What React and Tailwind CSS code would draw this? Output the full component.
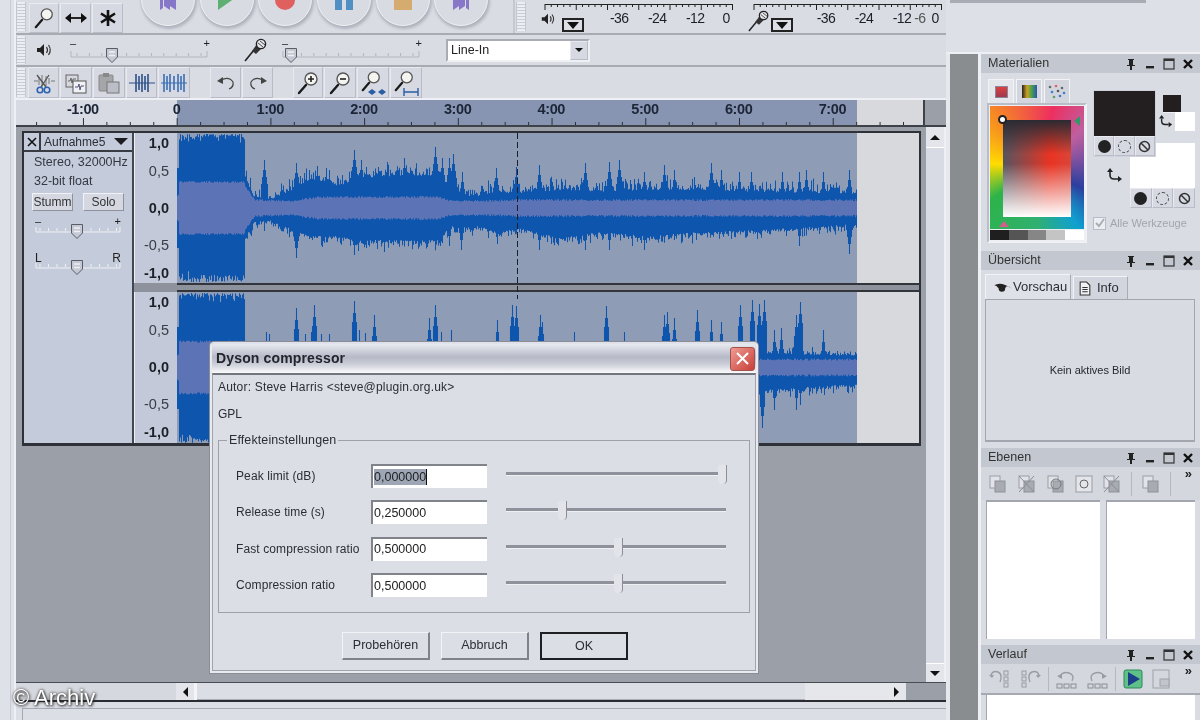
import React from "react";

const lerp = (pts, x) => {
  if (x <= pts[0][0]) return pts[0][1];
  for (let i = 1; i < pts.length; i++) {
    if (x <= pts[i][0]) {
      const [a, b] = pts[i - 1];
      const [c, d] = pts[i];
      return b + ((d - b) * (x - a)) / (c - a);
    }
  }
  return pts[pts.length - 1][1];
};

function makeWave({ seed, y0, y1, cy, top, bot, rms, spT, spB, jit, sw, sl }) {
  let s = seed;
  const r = () => {
    s = (s * 16807) % 2147483647;
    return s / 2147483647;
  };
  let blue = "";
  let light = "";
  for (let x = 178; x <= 857; x++) {
    let t, b;
    if (x < 246) {
      t = y0 + 1 + (x < 180 ? 34 : r() * r() * 12);
      b = y1 - 1 - (x < 180 ? 34 : r() * r() * 12);
    } else {
      t = lerp(top, x) - r() * r() * jit;
      b = lerp(bot, x) + r() * r() * 12;
    }
    for (const [sx, sy] of spT) {
      const d = Math.abs(x - sx);
      if (d < 1) t = Math.min(t, sy);
      else if (d < sw) t = Math.min(t, sy + d * sl + 3);
    }
    for (const [sx, sy] of spB) {
      const d = Math.abs(x - sx);
      if (d < 1) b = Math.max(b, sy);
      else if (d < sw) b = Math.max(b, sy - d * sl - 3);
    }
    blue += `M${x + 0.5} ${t.toFixed(1)}V${b.toFixed(1)}`;
    const a = (x < 246 ? (x < 180 ? 12 : 25) : lerp(rms, x)) + r() * 2;
    light += `M${x + 0.5} ${(cy - a).toFixed(1)}V${(cy + a).toFixed(1)}`;
  }
  return { blue, light };
}

const w1 = makeWave({
  seed: 4711,
  y0: 133,
  y1: 283,
  cy: 208,
  jit: 16,
  sw: 4,
  sl: 7,
  top: [[246, 178], [254, 196], [270, 200], [290, 192], [310, 180], [340, 186], [360, 178], [400, 176], [440, 176], [450, 196], [480, 196], [500, 192], [520, 194], [560, 190], [600, 192], [650, 190], [700, 190], [760, 192], [857, 194]],
  bot: [[246, 238], [254, 222], [270, 220], [290, 228], [310, 236], [340, 236], [360, 240], [400, 240], [440, 240], [450, 226], [480, 226], [500, 232], [520, 228], [560, 238], [600, 232], [650, 236], [700, 232], [760, 230], [857, 224]],
  rms: [[246, 20], [256, 7], [290, 6], [320, 10], [440, 10], [450, 6], [480, 6], [520, 7], [857, 7]],
  spT: [[265, 160], [297, 163], [310, 170], [318, 166], [330, 170], [355, 150], [362, 160], [388, 162], [405, 158], [436, 147], [443, 158], [450, 158], [454, 154], [463, 172], [497, 168], [517, 167], [540, 165], [586, 163], [610, 162], [620, 160], [645, 172], [665, 165], [675, 170], [712, 163], [722, 170], [740, 172], [752, 172], [783, 172], [800, 172], [807, 170], [824, 172], [850, 170]],
  spB: [[297, 258], [355, 255], [385, 252], [450, 246], [462, 250], [498, 244], [540, 250], [586, 250], [610, 250], [645, 250], [697, 240], [800, 246], [850, 254]],
});
const w2 = makeWave({
  seed: 9241,
  y0: 292,
  y1: 444,
  cy: 367.5,
  jit: 8,
  sw: 3,
  sl: 9,
  top: [[246, 352], [700, 352], [740, 352], [760, 353], [857, 356]],
  bot: [[246, 400], [740, 390], [760, 390], [857, 384]],
  rms: [[246, 20], [256, 8], [857, 7]],
  spT: [[267, 332], [270, 334], [297, 308], [306, 334], [312, 332], [315, 305], [322, 334], [330, 334], [355, 301], [360, 330], [366, 333], [375, 315], [430, 318], [436, 305], [442, 332], [452, 330], [498, 320], [513, 305], [517, 306], [541, 315], [543, 322], [575, 332], [607, 306], [625, 332], [665, 315], [668, 312], [675, 318], [698, 310], [712, 320], [722, 322], [741, 305], [753, 300], [760, 304], [765, 300], [775, 330], [782, 328], [797, 315], [801, 302], [824, 330]],
  spB: [[763, 428], [775, 410], [797, 410], [801, 405], [825, 395]],
});

const Wave = ({ w, top, height }) => (
  <svg width="680" height={height} viewBox={`178 ${top} 680 ${height}`} className="block shrink-0">
    <path d={w.blue} stroke="#0e55ad" strokeWidth="1.05" fill="none" />
    <path d={w.light} stroke="#5c74b5" strokeWidth="1.05" fill="none" />
  </svg>
);

const Grip = ({ className = "" }) => (
  <div className={`w-[10px] shrink-0 my-[2px] border-x border-[#c3c6d0] bg-[repeating-linear-gradient(180deg,#eceef3_0,#eceef3_2px,#c9ccd5_2px,#c9ccd5_3px)] ${className}`} />
);

const Btn = ({ children, className = "" }) => (
  <div className={`flex items-center justify-center shrink-0 bg-[#d7d9e2] border-t border-l border-[#e8eaef] border-r border-b border-r-[#b9bcc6] border-b-[#b9bcc6] ${className}`}>
    {children}
  </div>
);

const Mag = ({ inner, s = 24 }) => (
  <svg width={s} height={s} viewBox="0 0 24 24">
    <line x1="10" y1="14" x2="3" y2="22" stroke="#1a1a1a" strokeWidth="2.4" strokeLinecap="round" />
    <circle cx="15" cy="8" r="6" fill="#f4f5f0" stroke="#555" strokeWidth="1.4" />
    {inner}
  </svg>
);

const Speaker = ({ s = 18 }) => (
  <svg width={s} height={s} viewBox="0 0 18 18">
    <path d="M2 7h3l4-4v12l-4-4H2z" fill="#222" />
    <path d="M11.5 6q2 3 0 6M13.5 4q3.5 5 0 10" stroke="#333" strokeWidth="1.2" fill="none" />
  </svg>
);

const Mic = ({ s = 24 }) => (
  <svg width={s} height={s} viewBox="0 0 24 24">
    <path d="M1 23l9-11" stroke="#222" strokeWidth="1.6" />
    <path d="M8 13l4 3 8-8-5-5z" fill="#333" />
    <circle cx="17" cy="6" r="4.6" fill="#e5e6ea" stroke="#222" strokeWidth="1.4" />
    <path d="M14 5l5 4M16 3l5 4" stroke="#222" strokeWidth=".8" />
  </svg>
);

const Thumb = ({ className = "" }) => (
  <svg width="14" height="17" viewBox="0 0 14 17" className={`absolute ${className}`}>
    <path d="M1.5 1.5h11v8.5l-5.5 5.5-5.5-5.5z" fill="#c5c9d3" stroke="#5a5d67" strokeWidth="1" />
    <path d="M4 5h6M4 8.5h6" stroke="#eef0f4" strokeWidth="1.3" />
  </svg>
);

const Mixer = ({ w, thumb, className = "" }) => (
  <div className={`relative h-[30px] shrink-0 ${w} ${className}`}>
    <span className="absolute left-0 top-[3px] text-[11px] leading-none text-[#222]">–</span>
    <span className="absolute right-0 top-[3px] text-[11px] leading-none text-[#222]">+</span>
    <svg width="100%" height="12" className="absolute left-0 top-[14px]">
      <path d="M1 8H137M1 2V8M137 2V8" stroke="#b3b6bd" fill="none" />
      {Array.from({ length: 11 }).map((_, i) => (
        <line key={i} x1={i * 12.4 + 7} x2={i * 12.4 + 7} y1="4" y2="7" stroke="#b3b6bd" />
      ))}
    </svg>
    <Thumb className={thumb} />
  </div>
);

const RoundBtn = ({ children }) => (
  <div className="w-[54px] h-[54px] -mt-[28px] mr-[4.7px] rounded-full shrink-0 bg-[#d9dbe3] border border-[#eef0f4] shadow-[1px_2px_3px_1px_#b0b3bc] flex items-end justify-center pb-[15px]">
    {children}
  </div>
);

const SkipIcon = ({ flip }) => (
  <svg width="18" height="14" viewBox="0 0 18 14" className={flip ? "-scale-x-100" : ""}>
    <path d="M1 0h3v12L1 14zM5 0l6 0v4l6-4v14l-6-4v4l-6-4z" fill="#8877c8" />
  </svg>
);

const MeterTicks = ({ ticks, w = 190 }) => (
  <svg width={w} height="8" className="block">
    <path d={`M1 0.5H${w - 1}`} stroke="#222" />
    {ticks.map((t, i) => (
      <line key={i} x1={t} x2={t} y1="0" y2={i % 5 === 0 ? 6 : 3} stroke="#222" />
    ))}
  </svg>
);

const ticks = Array.from({ length: 31 }).map((_, i) => 1 + i * 6.25);

const Drop = ({ className = "" }) => (
  <div className={`w-[22px] h-[14px] border-2 border-[#222] bg-[#dcdee6] flex items-center justify-center shrink-0 ${className}`}>
    <div className="w-0 h-0 border-x-[6px] border-x-transparent border-t-[7px] border-t-[#111]" />
  </div>
);

const ML = ({ children, className = "" }) => (
  <span className={`mt-[6px] text-[14px] leading-none tracking-[-0.6px] text-[#1c1f28] shrink-0 ${className}`}>{children}</span>
);

const ScissorsIcon = () => (
  <svg width="24" height="24" viewBox="0 0 24 24">
    <path d="M2 10h4M19 10h4M7 6v8M10 4v12M14 5v10M17 7v6" stroke="#777" strokeWidth="1" />
    <path d="M17 4L9 16M5 4l9 12" stroke="#555" strokeWidth="1.3" />
    <circle cx="8" cy="19" r="2.8" fill="none" stroke="#2a62b0" strokeWidth="1.6" />
    <circle cx="15" cy="19" r="2.8" fill="none" stroke="#2a62b0" strokeWidth="1.6" />
  </svg>
);
const CopyIcon = () => (
  <svg width="24" height="24" viewBox="0 0 24 24">
    <rect x="2" y="4" width="12" height="12" fill="#d5d7de" stroke="#666" />
    <path d="M4 10h2l1-3 1 5 1-4h3" stroke="#666" fill="none" />
    <rect x="9" y="10" width="13" height="12" fill="#f0f1f4" stroke="#555" />
    <path d="M11 16h3l1-3 1 6 1-4h3" stroke="#557" fill="none" />
  </svg>
);
const PasteIcon = () => (
  <svg width="24" height="24" viewBox="0 0 24 24">
    <rect x="2" y="4" width="14" height="16" rx="1" fill="#a5a6aa" stroke="#888" />
    <rect x="6" y="2" width="6" height="4" fill="#888" />
    <rect x="10" y="11" width="12" height="11" fill="#bcbec7" stroke="#777" />
  </svg>
);
const TrimIcon = ({ c = "#2b4f8a", gap }) => (
  <svg width="26" height="22" viewBox="0 0 26 22">
    <path d="M0 11h26" stroke={c} strokeWidth="1" />
    {(gap ? [3, 6, 9, 13, 17, 20, 23] : [7, 10, 13, 16, 19]).map((x, i) => (
      <path key={i} d={`M${x} ${i % 2 ? 4 : 2}V${i % 2 ? 18 : 20}`} stroke={c} strokeWidth="1.6" />
    ))}
  </svg>
);
const UndoIcon = ({ flip }) => (
  <svg width="20" height="18" viewBox="0 0 20 18" className={flip ? "-scale-x-100" : ""}>
    <path d="M5 6q8-4 12 2q1 5-4 7" stroke="#444" strokeWidth="1.2" fill="none" />
    <path d="M1 7l6-4v7z" fill="#444" />
  </svg>
);

const HdrBtns = () => (
  <div className="flex items-center gap-[7px] ml-auto pr-[6px]">
    <svg width="12" height="12" viewBox="0 0 12 12"><path d="M3 1h6v1H8v5h2v1H7v4H5V8H2V7h2V2H3z" fill="#222" /></svg>
    <svg width="12" height="12" viewBox="0 0 12 12"><rect x="2" y="8" width="8" height="2.4" fill="#222" /></svg>
    <svg width="12" height="12" viewBox="0 0 12 12"><rect x="1" y="1" width="10" height="10" fill="none" stroke="#333" strokeWidth="1.2" /><rect x="1" y="1" width="10" height="2" fill="#333" /></svg>
    <svg width="12" height="12" viewBox="0 0 12 12"><path d="M2 2l8 8M10 2l-8 8" stroke="#111" strokeWidth="2.4" /></svg>
  </div>
);

const PanelHead = ({ title }) => (
  <div className="h-[19px] bg-[#c3c7d0] flex items-center pl-[7px] shrink-0">
    <span className="text-[12.5px] text-[#333]">{title}</span>
    <HdrBtns />
  </div>
);

const GrayLayers = ({ v = 0 }) => (
  <svg width="20" height="20" viewBox="0 0 20 20">
    <rect x="2" y="2" width="10" height="12" fill="#e2e3e8" stroke="#9c9ea6" />
    <rect x="7" y="7" width="10" height="11" fill="#a8abb2" stroke="#8f9199" />
    {v === 1 && <path d="M2 2l15 16M17 2L2 18" stroke="#8b8d95" strokeWidth="1" />}
    {v === 2 && <circle cx="10" cy="10" r="5" fill="none" stroke="#777" />}
  </svg>
);

const HistoryIcon = ({ flip }) => (
  <svg width="24" height="22" viewBox="0 0 24 22" className={flip ? "-scale-x-100" : ""}>
    <path d="M3 7q2-5 7-3t2 10" stroke="#9a9ca4" fill="none" strokeWidth="1.4" />
    <path d="M1 7h5l-2 3z" fill="#9a9ca4" />
    {[3, 9, 15].map((y) => (
      <rect key={y} x="16" y={y} width="4" height="4" fill="none" stroke="#9a9ca4" />
    ))}
  </svg>
);
const UndoList = ({ flip }) => (
  <svg width="24" height="22" viewBox="0 0 24 22" className={flip ? "-scale-x-100" : ""}>
    <path d="M4 9q4-6 10-4t3 8" stroke="#9a9ca4" fill="none" strokeWidth="1.4" />
    <path d="M2 8l5-2v5z" fill="#9a9ca4" />
    {[2, 9, 16].map((x) => (
      <rect key={x} x={x} y="16" width="5" height="4" fill="none" stroke="#8c8e96" />
    ))}
  </svg>
);

const Swatch3 = ({ className = "" }) => (
  <div className={`flex h-[20px] ${className}`}>
    <Btn className="flex-1"><div className="w-[13px] h-[13px] rounded-full bg-[#222]" /></Btn>
    <Btn className="flex-1"><div className="w-[13px] h-[13px] rounded-full border border-dashed border-[#444]" /></Btn>
    <Btn className="flex-1">
      <svg width="13" height="13" viewBox="0 0 13 13"><circle cx="6.5" cy="6.5" r="5" fill="none" stroke="#333" strokeWidth="1.5" /><path d="M3 3l7 7" stroke="#333" strokeWidth="1.5" /></svg>
    </Btn>
  </div>
);

const SwapIcon = ({ s = 16 }) => (
  <svg width={s} height={s} viewBox="0 0 16 16">
    <path d="M3 5v3q0 4 4 4h4" stroke="#222" strokeWidth="1.6" fill="none" />
    <path d="M3 1l3 4H0zM15 12l-4 3V9z" fill="#222" />
  </svg>
);

const TrackLabel = ({ children, h, bold }) => (
  <div className={`flex items-center justify-end pr-[8px] text-[14.5px] leading-none ${h} ${bold ? "font-bold text-[#1d2029]" : "text-[#3b3e48]"}`}>
    {children}
  </div>
);

const VRuler = () => (
  <div className="w-[43px] shrink-0 bg-[#c3c9d8] border-l border-[#eef0f5] flex flex-col pt-[1px]">
    <TrackLabel h="h-[18px]" bold>1,0</TrackLabel>
    <div className="h-[10px]" />
    <TrackLabel h="h-[18px]">0,5</TrackLabel>
    <div className="h-[19px]" />
    <TrackLabel h="h-[18px]" bold>0,0</TrackLabel>
    <div className="h-[19px]" />
    <TrackLabel h="h-[18px]">-0,5</TrackLabel>
    <div className="h-[10px]" />
    <TrackLabel h="h-[18px]" bold>-1,0</TrackLabel>
  </div>
);

const Row = ({ label, value, thumb, selected }) => (
  <div className="flex items-center h-[24px]">
    <span className="w-[135px] shrink-0 text-[12px] text-[#2b2e36] tracking-[0.1px]">{label}</span>
    <div className="w-[116px] h-[24px] shrink-0 bg-white border-t-2 border-l-2 border-t-[#808389] border-l-[#808389] flex items-center pl-[1px] text-[12.5px] text-[#222]">
      {selected ? (
        <span className="bg-[#9ea6b6] border-r border-[#111] leading-[16px]">{value}</span>
      ) : (
        value
      )}
    </div>
    <div className="relative w-[220px] h-[20px] ml-[19px] shrink-0">
      <div className="absolute left-0 right-0 top-[6px] h-[4px] bg-[#8f929a] border-b border-[#eef0f4]" />
      <div className={`absolute top-[-1px] w-[9px] h-[19px] bg-[#e2e4ea] border-r border-[#8b8e97] rounded-b-[4px] ${thumb}`} />
    </div>
  </div>
);

const DlgBtn = ({ children, def }) => (
  <div className={`w-[88px] h-[28px] flex items-center justify-center text-[12.5px] text-[#2a2d35] bg-[#dcdee6] ${def ? "border-2 border-[#1d1f24]" : "border border-[#f3f4f7] border-r-2 border-b-2 border-r-[#7f828b] border-b-[#7f828b]"}`}>
    {children}
  </div>
);

export default function App() {
  const font = { fontFamily: '"Liberation Sans", Arial, sans-serif' };
  return (
    <div style={font} className="relative w-[1200px] h-[720px] overflow-hidden flex bg-[#dadce4] blur-[0.35px]">
      {/* left strip */}
      <div className="w-[16px] shrink-0 bg-[#dfe1e8] border-r-2 border-[#eef0f5] flex">
        <div className="w-[11px] border-r border-[#c9ccd5]" />
      </div>

      {/* audacity */}
      <div className="w-[930px] shrink-0 flex flex-col">
        {/* row 1 */}
        <div className="h-[35px] shrink-0 flex border-b-2 border-[#a8abb2] overflow-hidden">
          <Grip />
          <div className="flex gap-px ml-[3px] mt-[3px] shrink-0 h-[30px]">
            <Btn className="w-[30px]"><Mag s={22} /></Btn>
            <Btn className="w-[31px]">
              <svg width="22" height="12" viewBox="0 0 22 12"><path d="M3 6h16" stroke="#111" strokeWidth="1.8" /><path d="M0 6l6-5v10zM22 6l-6-5v10z" fill="#111" /></svg>
            </Btn>
            <Btn className="w-[31px]">
              <svg width="18" height="18" viewBox="0 0 18 18"><path d="M9 1v16M2 4.5l14 9M16 4.5l-14 9" stroke="#111" strokeWidth="2.6" /></svg>
            </Btn>
          </div>
          <div className="flex ml-[18px] shrink-0 w-[367px]">
            <RoundBtn><SkipIcon /></RoundBtn>
            <RoundBtn><svg width="20" height="14" viewBox="0 0 20 14"><path d="M1 0h0l17 2L1 14z" fill="#5fb070" /></svg></RoundBtn>
            <RoundBtn><div className="w-[20px] h-[14px] rounded-b-full bg-[#e0605f]" /></RoundBtn>
            <RoundBtn><div className="w-[18px] h-[10px] flex justify-between"><div className="w-[7px] bg-[#4f8fc4]" /><div className="w-[7px] bg-[#4f8fc4]" /></div></RoundBtn>
            <RoundBtn><div className="w-[18px] h-[10px] bg-[#d6ab70]" /></RoundBtn>
            <RoundBtn><SkipIcon flip /></RoundBtn>
          </div>
          <div className="w-[2px] bg-[#c5c8d0] ml-[5px] shrink-0" />
          <Grip className="ml-[1px]" />
          <div className="flex flex-col flex-1 pl-[18px] pt-[4px]">
            <div className="flex">
              <MeterTicks ticks={ticks} />
              <div className="w-[19px]" />
              <MeterTicks ticks={ticks} />
            </div>
            <div className="flex items-start h-[26px] -mt-[7px] -ml-[4px]">
              <div className="mt-[6px] shrink-0"><Speaker s={16} /></div>
              <Drop className="ml-[6px] mt-[13px]" />
              <ML className="ml-[26px]">-36</ML>
              <ML className="ml-[19.6px]">-24</ML>
              <ML className="ml-[19.6px]">-12</ML>
              <ML className="ml-[18px]">0</ML>
              <div className="ml-[18px] mt-[5px] shrink-0"><Mic s={22} /></div>
              <Drop className="ml-[1px] mt-[13px]" />
              <ML className="ml-[24px]">-36</ML>
              <ML className="ml-[19.6px]">-24</ML>
              <ML className="ml-[19.6px]">-12</ML>
              <ML className="ml-[3px] text-[#555]">-6</ML>
              <ML className="ml-[6px]">0</ML>
            </div>
          </div>
        </div>

        {/* row 2 */}
        <div className="h-[32px] shrink-0 flex items-center border-b-2 border-[#a8abb2]">
          <Grip className="h-[28px]" />
          <div className="ml-[9px] shrink-0"><Speaker /></div>
          <Mixer w="w-[140px]" thumb="left-[35px] top-[12px]" className="ml-[17px]" />
          <div className="ml-[34px] shrink-0"><Mic /></div>
          <Mixer w="w-[140px]" thumb="left-[2px] top-[12px]" className="ml-[14px]" />
          <div className="ml-[24px] w-[144px] h-[23px] shrink-0 bg-white border-2 border-[#a9acb4] border-r-[#eef0f4] border-b-[#eef0f4] flex items-center pl-[3px] text-[12.5px] text-[#222]">
            Line-In
            <Btn className="ml-auto w-[18px] h-[19px] bg-[#d5d6da]">
              <div className="w-0 h-0 border-x-[4px] border-x-transparent border-t-[4px] border-t-[#111]" />
            </Btn>
          </div>
        </div>

        {/* row 3 */}
        <div className="h-[33px] shrink-0 flex items-center border-b-2 border-[#eef0f5]">
          <Grip className="h-[29px]" />
          <div className="flex gap-[1px] ml-[2px]">
            <Btn className="w-[31px] h-[31px]"><ScissorsIcon /></Btn>
            <Btn className="w-[32px] h-[31px]"><CopyIcon /></Btn>
            <Btn className="w-[32px] h-[31px]"><PasteIcon /></Btn>
            <Btn className="w-[31px] h-[31px]"><TrimIcon /></Btn>
            <Btn className="w-[32px] h-[31px]"><TrimIcon c="#3a6fb4" gap /></Btn>
          </div>
          <div className="flex gap-[1px] ml-[20px]">
            <Btn className="w-[31px] h-[31px]"><UndoIcon /></Btn>
            <Btn className="w-[31px] h-[31px]"><UndoIcon flip /></Btn>
          </div>
          <div className="flex gap-[1px] ml-[20px]">
            <Btn className="w-[30px] h-[31px]"><Mag inner={<path d="M12 8h6M15 5v6" stroke="#222" strokeWidth="1.6" />} /></Btn>
            <Btn className="w-[32px] h-[31px]"><Mag inner={<path d="M12 8h6" stroke="#222" strokeWidth="1.6" />} /></Btn>
            <Btn className="w-[32px] h-[31px]">
              <div className="relative w-[26px] h-[26px]"><Mag s={22} /><svg width="18" height="8" viewBox="0 0 18 8" className="absolute right-0 bottom-0"><path d="M0 4l4-3v6zM8 4l-4-3v6zM10 4l4-3v6zM18 4l-4-3v6z" fill="#2a5ea5" /></svg></div>
            </Btn>
            <Btn className="w-[32px] h-[31px]">
              <div className="relative w-[26px] h-[26px]"><Mag s={22} /><svg width="16" height="8" viewBox="0 0 16 8" className="absolute right-0 bottom-0"><path d="M1 0v8M15 0v8M1 4h14" stroke="#2a5ea5" strokeWidth="1.4" /></svg></div>
            </Btn>
          </div>
        </div>

        {/* ruler */}
        <div className="h-[27px] shrink-0 flex border-b-2 border-[#3f4148] bg-[#9a9fa8]">
          <div className="w-[909px] flex flex-col bg-[linear-gradient(90deg,#d8dae3_161px,#8795b3_161px,#8795b3_841px,#d8d9dc_841px)] border-r-2 border-[#3f4148]">
            <div className="flex pl-[20px] pt-[1px] h-[18px] text-[14.5px] leading-[17px] font-bold text-[#1c2536] tracking-[-0.4px]">
              {["-1:00", "0", "1:00", "2:00", "3:00", "4:00", "5:00", "6:00", "7:00"].map((t) => (
                <span key={t} className="w-[93.7px] shrink-0 text-center">{t}</span>
              ))}
            </div>
            <svg width="909" height="7" className="block mt-auto">
              {Array.from({ length: 39 }).map((_, i) => (
                <line key={i} x1={20.6 + i * 23.43} x2={20.6 + i * 23.43} y1={(i + 2) % 4 === 0 ? 0 : 4} y2="7" stroke="#2d2f36" />
              ))}
            </svg>
          </div>
        </div>

        {/* center */}
        <div className="flex-1 flex min-h-0">
          <div className="w-[910px] bg-[#9a9fa8] pt-[4px] pl-[6px] relative">
            {/* tracks */}
            <div className="w-[899px] h-[315px] flex bg-[#8e929c] border-2 border-[#2f3138] border-b-[3px]">
              <div className="w-[110px] shrink-0 bg-[#c4cbda] border-r-2 border-[#454750] flex flex-col">
                <div className="h-[19px] flex items-center border-b-2 border-[#3a3c44] shrink-0">
                  <div className="w-[17px] h-[19px] border-r-2 border-[#3a3c44] flex items-center justify-center">
                    <svg width="10" height="10" viewBox="0 0 10 10"><path d="M1 1l8 8M9 1l-8 8" stroke="#111" strokeWidth="1.6" /></svg>
                  </div>
                  <span className="ml-[3px] text-[12px] text-[#2b2e38]">Aufnahme5</span>
                  <div className="ml-auto mr-[4px] w-0 h-0 border-x-[7px] border-x-transparent border-t-[7px] border-t-[#1c1c20]" />
                </div>
                <div className="pl-[10px] pt-[1px] text-[12.5px] leading-[19px] text-[#353843] whitespace-nowrap">
                  <div>Stereo, 32000Hz</div>
                  <div>32-bit float</div>
                </div>
                <div className="flex gap-[10px] pl-[8px] mt-[2px]">
                  <div className="w-[41px] h-[18px] flex items-center justify-center bg-[#d5d8e1] border-t border-l border-[#f0f2f6] border-r border-b border-r-[#8f929c] border-b-[#8f929c] text-[12px] text-[#333]">Stumm</div>
                  <div className="w-[41px] h-[18px] flex items-center justify-center bg-[#d5d8e1] border-t border-l border-[#f0f2f6] border-r border-b border-r-[#8f929c] border-b-[#8f929c] text-[12px] text-[#333]">Solo</div>
                </div>
                {[
                  ["–", "+", "text-[11px]"],
                  ["L", "R", "text-[12px]"],
                ].map(([a, b, tc], i) => (
                  <div key={a} className={`relative mx-[11px] h-[26px] ${i === 0 ? "mt-[5px]" : "mt-[10px]"}`}>
                    <span className={`absolute left-0 top-0 leading-none text-[#222] ${tc}`}>{a}</span>
                    <span className={`absolute right-0 top-0 leading-none text-[#222] ${tc}`}>{b}</span>
                    <svg width="86" height="10" className="absolute left-0 top-[9px]">
                      <path d="M1 7H85M1 2V7M85 2V7" stroke="#eef0f4" fill="none" />
                      {Array.from({ length: 10 }).map((_, k) => (
                        <line key={k} x1={k * 8.5 + 5} x2={k * 8.5 + 5} y1="3" y2="6" stroke="#eef0f4" />
                      ))}
                    </svg>
                    <Thumb className="left-[35px] top-[7px]" />
                  </div>
                ))}
              </div>
              <div className="flex-1 flex flex-col">
                <div className="h-[150px] flex shrink-0">
                  <VRuler />
                  <div className="h-[150px] overflow-hidden bg-[#8f9cb6] shrink-0"><Wave w={w1} top={133} height={150} /></div>
                  <div className="flex-1 bg-[#d8d9dc]" />
                </div>
                <div className="h-[9px] shrink-0 border-y-2 border-[#33353c] bg-[#8e929c] ml-[43px]" />
                <div className="flex-1 flex">
                  <VRuler />
                  <div className="h-[151px] overflow-hidden bg-[#8f9cb6] shrink-0"><Wave w={w2} top={292} height={151} /></div>
                  <div className="flex-1 bg-[#d8d9dc]" />
                </div>
              </div>
            </div>
            {/* edit cursor */}
            <div className="absolute left-[501px] top-[6px] h-[166px] w-px bg-[repeating-linear-gradient(180deg,#1c1f28_0,#1c1f28_6px,transparent_6px,transparent_9px)]" />
          </div>
          {/* v scroll */}
          <div className="w-[20px] shrink-0 bg-[#dfe1e8] border-r-2 border-[#eef0f5] flex flex-col">
            <div className="h-[21px] bg-[#e4e5ea] border-b border-[#fff] flex items-center justify-center">
              <div className="w-0 h-0 border-x-[5px] border-x-transparent border-b-[5px] border-b-[#111]" />
            </div>
            <div className="flex-1 bg-[#d9dbe4]" />
            <div className="h-[19px] bg-[#e4e5ea] border-t border-[#fff] flex items-center justify-center">
              <div className="w-0 h-0 border-x-[5px] border-x-transparent border-t-[5px] border-t-[#111]" />
            </div>
          </div>
        </div>

        {/* h scroll */}
        <div className="h-[20px] shrink-0 flex border-t border-[#4a4c54] border-b-2 border-b-[#2a2c32]">
          <div className="w-[160px] bg-[#d6d8df]" />
          <div className="w-[18px] bg-[#e4e5ea] flex items-center justify-center">
            <div className="w-0 h-0 border-y-[5px] border-y-transparent border-r-[5px] border-r-[#111]" />
          </div>
          <div className="w-[3px] bg-[#f4f5f8]" />
          <div className="w-[608px] bg-[#dcdee5] border-b border-[#a9acb6]" />
          <div className="w-[101px] bg-[#e6e7eb] flex items-center justify-end pr-[7px]">
            <div className="w-0 h-0 border-y-[5px] border-y-transparent border-l-[5px] border-l-[#111]" />
          </div>
          <div className="flex-1 bg-[#9a9fa8]" />
        </div>

        {/* status */}
        <div className="h-[18px] shrink-0 bg-[#dcdee6] pt-[6px] pl-[6px]">
          <div className="h-full border-t border-l border-[#a6a9b2]" />
        </div>
      </div>

      {/* right */}
      <div className="flex-1 flex flex-col min-w-0">
        <div className="h-[54px] shrink-0 bg-[#dee0e8] flex flex-col border-b-2 border-[#eef0f5]">
          <div className="h-[3px] w-[196px] ml-[4px] bg-[#a9acb4]" />
        </div>
        <div className="flex-1 flex min-h-0">
          <div className="w-[4px] bg-[#e6e8ee] shrink-0" />
          <div className="w-[28px] bg-[#898d90] shrink-0" />
          <div className="w-[3px] bg-[#eef0f5] shrink-0" />
          <div className="flex-1 flex flex-col bg-[#dadce4] min-w-0">
            {/* Materialien */}
            <PanelHead title="Materialien" />
            <div className="h-[178px] shrink-0 flex relative">
              <div className="ml-[6px] w-[100px] shrink-0 flex flex-col pt-[6px]">
                <div className="flex gap-[2px] pl-[1px] h-[24px]">
                  <div className="w-[26px] bg-[#e4e6ec] border-t border-x border-[#f2f3f6] flex items-center justify-center">
                    <div className="w-[13px] h-[12px] bg-[linear-gradient(180deg,#d84040,#a03850)] border border-[#889]" />
                  </div>
                  <div className="w-[26px] bg-[#d2d5dd] border-t border-x border-[#f2f3f6] flex items-center justify-center">
                    <div className="w-[15px] h-[13px] bg-[linear-gradient(90deg,#222,#d0a020,#40a050,#3050b0)]" />
                  </div>
                  <div className="w-[26px] bg-[#d2d5dd] border-t border-x border-[#f2f3f6] flex items-center justify-center">
                    <svg width="18" height="14" viewBox="0 0 18 14">
                      {[[2,2,"#666"],[8,1,"#e06060"],[14,3,"#666"],[4,7,"#3a7fd0"],[10,6,"#555"],[16,8,"#3a7fd0"],[6,12,"#60a060"],[12,11,"#3a7fd0"]].map(([x,y,c],i)=>(<circle key={i} cx={x} cy={y} r="1.3" fill={c} />))}
                    </svg>
                  </div>
                </div>
                <div className="h-[140px] border-2 border-[#b9bdc7] border-r-[#f0f1f5] border-b-[#f0f1f5] bg-[#eceef2] p-[1px] flex flex-col">
                  <div className="relative h-[123px] bg-[conic-gradient(from_315deg_at_50%_50%,#f7931e_0deg,#ed2f5f_60deg,#c05fa0_95deg,#2b3f9f_160deg,#10a0d0_190deg,#30b070_225deg,#2db34a_280deg,#ffdc00_320deg,#f7931e_360deg)] pt-[14px] pl-[13px]">
                    <div className="relative w-[68px] h-[97px] bg-[linear-gradient(180deg,#2a2a32_0%,transparent_35%),linear-gradient(180deg,transparent_45%,#ffffff_100%),linear-gradient(90deg,#555560_0%,#ea3322_70%,#d8463a_100%)]">
                      <div className="absolute -left-[5px] -top-[5px] w-[9px] h-[9px] rounded-full bg-white border-2 border-[#222]" />
                    </div>
                    <div className="absolute left-[84px] top-[10px] w-0 h-0 border-y-[5px] border-y-transparent border-r-[6px] border-r-[#2f9a68]" />
                    <div className="absolute left-[9px] bottom-[2px] w-0 h-0 border-x-[5px] border-x-transparent border-b-[6px] border-b-[#d0608a]" />
                  </div>
                  <div className="h-[10px] flex mt-[1px] shrink-0">
                    <div className="flex-1 bg-[#1f1f1f]" />
                    <div className="flex-1 bg-[#555]" />
                    <div className="flex-1 bg-[#868686]" />
                    <div className="flex-1 bg-[#c4c4c4]" />
                    <div className="flex-1 bg-white" />
                  </div>
                </div>
              </div>
              <div className="flex-1 flex flex-col pt-[17px] pl-[6px] min-w-0">
                <div className="flex relative z-10">
                  <div className="w-[63px] shrink-0 border border-[#cfd2da]">
                    <div className="h-[45px] bg-[#231f20]" />
                    <Swatch3 />
                  </div>
                  <div className="flex flex-col ml-[7px] pt-[5px]">
                    <div className="w-[18px] h-[18px] bg-[#231f20] border-b border-[#eef0f5]" />
                    <div className="flex items-start -mt-[1px]">
                      <div className="mt-[2px] -ml-[4px] w-[16px] shrink-0"><SwapIcon s={14} /></div>
                      <div className="w-[20px] h-[19px] bg-white" />
                    </div>
                  </div>
                </div>
                <div className="flex -mt-[14px]">
                  <div className="w-[37px] shrink-0 pt-[24px] pl-[14px]"><SwapIcon /></div>
                  <div className="w-[65px] shrink-0">
                    <div className="h-[45px] bg-white" />
                    <Swatch3 />
                  </div>
                </div>
                <div className="flex items-center mt-[7px] gap-[4px]">
                  <div className="w-[13px] h-[13px] bg-[#eceef2] border border-[#b9bcc6] flex items-center justify-center shrink-0">
                    <svg width="10" height="10" viewBox="0 0 10 10"><path d="M1 5l3 3 5-7" stroke="#a9acb4" strokeWidth="1.8" fill="none" /></svg>
                  </div>
                  <span className="text-[11px] text-[#a2a5ad] whitespace-nowrap">Alle Werkzeuge</span>
                </div>
              </div>
            </div>

            {/* Übersicht */}
            <PanelHead title="Übersicht" />
            <div className="flex pl-[4px] pt-[5px] h-[29px] shrink-0 items-end text-[13px] text-[#2b2e38] gap-px">
              <div className="w-[86px] h-[25px] bg-[#dfe1e8] border-t border-l border-[#f2f3f6] border-r border-r-[#a9acb6] flex items-center pl-[7px]">
                <svg width="20" height="13" viewBox="0 0 18 12" className="shrink-0">
                  <path d="M1 4q6-4 16 3q-5-5-6 0a3 3 0 0 1-6 0q-2-3-4-3z" fill="#222" />
                </svg>
                <span>Vorschau</span>
              </div>
              <div className="w-[55px] h-[23px] ml-px bg-[#d2d5dd] border-t border-l border-[#f2f3f6] border-r border-r-[#a9acb6] flex items-center pl-[5px] gap-[6px]">
                <svg width="12" height="15" viewBox="0 0 11 14" className="shrink-0"><path d="M1 1h6l3 3v9H1z" fill="#f0f1f4" stroke="#333" /><path d="M3 6h5M3 8h5M3 10h5" stroke="#333" /></svg>
                <span>Info</span>
              </div>
            </div>
            <div className="h-[143px] shrink-0 ml-[4px] mr-[5px] border border-[#a3a6ae] border-b-2 flex items-center justify-center text-[11px] text-[#26282f] bg-[#d9dbe3]">
              Kein aktives Bild
            </div>

            {/* Ebenen */}
            <div className="h-[6px] shrink-0" />
            <PanelHead title="Ebenen" />
            <div className="h-[33px] shrink-0 bg-[#d5d7df] flex items-center pl-[7px] gap-[9px] relative">
              <GrayLayers />
              <GrayLayers v={1} />
              <GrayLayers v={2} />
              <svg width="18" height="20" viewBox="0 0 18 20"><rect x="1" y="2" width="16" height="16" fill="#e4e5ea" stroke="#9a9ca4" /><circle cx="9" cy="10" r="4" fill="none" stroke="#666" /></svg>
              <GrayLayers v={1} />
              <div className="w-px h-[24px] bg-[#b5b8c0]" />
              <GrayLayers />
              <div className="w-px h-[24px] bg-[#b5b8c0]" />
              <span className="absolute right-[8px] top-[0px] text-[13px] font-bold text-[#222] leading-none">»</span>
            </div>
            <div className="h-[139px] shrink-0 flex gap-[6px] pl-[5px] pr-[5px]">
              <div className="w-[114px] bg-white border-t-2 border-l border-[#a3a6ae]" />
              <div className="flex-1 bg-white border-t-2 border-l border-[#a3a6ae]" />
            </div>

            {/* Verlauf */}
            <div className="h-[6px] shrink-0" />
            <PanelHead title="Verlauf" />
            <div className="h-[31px] shrink-0 bg-[#d5d7df] flex items-center pl-[7px] gap-[6px] relative border-b-2 border-[#a6a9b2]">
              <HistoryIcon />
              <HistoryIcon flip />
              <div className="w-px h-[24px] bg-[#b5b8c0]" />
              <UndoList />
              <UndoList flip />
              <div className="w-px h-[24px] bg-[#b5b8c0]" />
              <svg width="22" height="22" viewBox="0 0 22 22"><rect x="2" y="2" width="18" height="18" rx="2" fill="#5fc088" stroke="#2a8a5a" /><path d="M6 4l12 7-12 7z" fill="#1d3f8a" /></svg>
              <svg width="22" height="22" viewBox="0 0 22 22"><rect x="3" y="2" width="16" height="18" fill="none" stroke="#a0a2aa" /><rect x="10" y="11" width="9" height="7" fill="#c3c5cc" stroke="#a0a2aa" /></svg>
              <span className="absolute right-[8px] top-[0px] text-[13px] font-bold text-[#222] leading-none">»</span>
            </div>
            <div className="flex-1 bg-white ml-[5px] mr-[5px] border-l border-[#a3a6ae]" />
          </div>
        </div>
      </div>

      {/* dialog */}
      <div className="absolute left-[210px] top-[342px] w-[548px] h-[331px] flex flex-col bg-[#dcdee6] rounded-t-[4px] border-2 border-[#e8eaef] border-t-[#dfe2ea] shadow-[0_0_0_1px_#8a8d96]">
        <div className="h-[29px] shrink-0 flex items-center pl-[4px] rounded-t-[3px] bg-[linear-gradient(180deg,#e8eaf0_0%,#b6b9c7_45%,#ccced8_70%,#fbfbfc_100%)]">
          <span className="text-[14px] font-bold text-[#23252c] tracking-[0.15px]">Dyson compressor</span>
          <div className="ml-auto mr-[1px] w-[25px] h-[24px] rounded-[3px] bg-[linear-gradient(135deg,#ee9c92,#c93f3a)] border border-[#a5504c] flex items-center justify-center">
            <svg width="15" height="15" viewBox="0 0 15 15"><path d="M2 2l11 11M13 2L2 13" stroke="#fff" strokeWidth="2" /></svg>
          </div>
        </div>
        <div className="flex-1 flex flex-col border border-[#a0a3ac] border-t-2 border-t-[#72757e] px-[5px] min-h-0">
          <div className="pt-[3px] text-[12px] leading-[18px] text-[#2b2e36] tracking-[0.2px] h-[30px]">Autor: Steve Harris &lt;steve@plugin.org.uk&gt;</div>
          <div className="text-[12px] leading-[18px] text-[#2b2e36] h-[35px]">GPL</div>
          <div className="relative h-[173px] border border-[#9ea1aa] flex flex-col pl-[17px] pt-[23px] gap-[12.4px] shrink-0">
            <span className="absolute left-[8px] -top-[8px] bg-[#dcdee6] px-[2px] text-[12.5px] leading-[15px] text-[#2b2e36] tracking-[0.1px]">Effekteinstellungen</span>
            <Row label="Peak limit (dB)" value="0,000000" thumb="left-[212px]" selected />
            <Row label="Release time (s)" value="0,250000" thumb="left-[52px]" />
            <Row label="Fast compression ratio" value="0,500000" thumb="left-[108px]" />
            <Row label="Compression ratio" value="0,500000" thumb="left-[108px]" />
          </div>
          <div className="flex justify-center gap-[11px] pt-[19px] pl-[2px]">
            <DlgBtn>Probehören</DlgBtn>
            <DlgBtn>Abbruch</DlgBtn>
            <DlgBtn def>OK</DlgBtn>
          </div>
        </div>
      </div>

      {/* watermark */}
      <span className="absolute left-[13px] top-[685px] text-[22px] leading-[26px] text-white [text-shadow:1px_1px_3px_#222,0_0_3px_#333]">© Archiv</span>
    </div>
  );
}
